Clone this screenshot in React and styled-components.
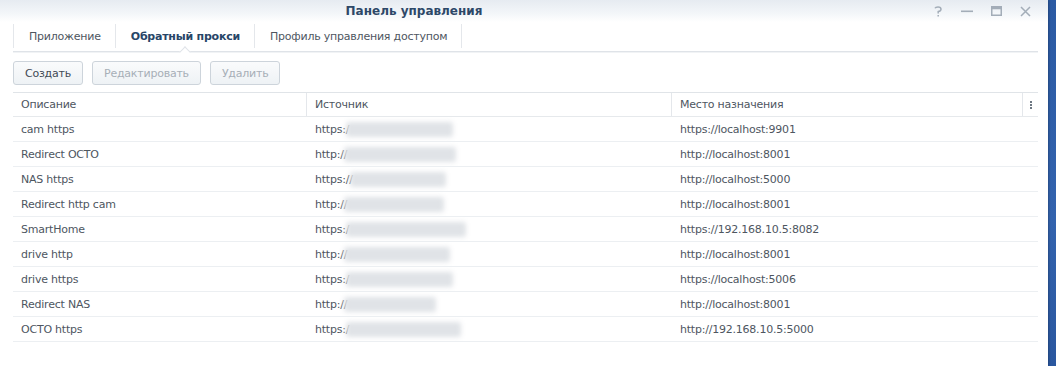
import React from "react";
import styled, { createGlobalStyle } from "styled-components";

const Global = createGlobalStyle`
  html, body { margin: 0; padding: 0; }
  body {
    width: 1056px;
    height: 366px;
    overflow: hidden;
    background: linear-gradient(180deg, #2b5aa3 0%, #3363ae 60%, #2a579f 100%);
    font-family: "DejaVu Sans", Verdana, sans-serif;
    font-size: 11px;
    letter-spacing: -0.22px;
    color: #4e565f;
  }
`;

const Window = styled.div`
  width: 1048px;
  height: 366px;
  background: #fff;
  display: flex;
  flex-direction: column;
  box-shadow: 1px 0 2px rgba(0, 0, 0, 0.25);
`;

const TitleBar = styled.div`
  height: 22px;
  flex: none;
  display: flex;
  align-items: center;
  background: linear-gradient(180deg, #e6ebf1 0%, #f3f6f9 60%, #ffffff 100%);
  position: relative;
`;

const Title = styled.div`
  flex: 1;
  text-align: center;
  padding-right: 220px;
  font-size: 12px;
  font-weight: bold;
  letter-spacing: 0;
  color: #2d4868;
  line-height: 22px;
`;

const WinControls = styled.div`
  position: absolute;
  right: 14px;
  top: 0;
  height: 22px;
  display: flex;
  align-items: center;
  gap: 11px;
`;

const CtrlBtn = styled.span`
  width: 18px;
  height: 18px;
  display: flex;
  align-items: center;
  justify-content: center;
  color: #a3adb8;
`;

const Body = styled.div`
  flex: 1;
  display: flex;
  flex-direction: column;
  padding: 0 10px 0 13px;
`;

const TabBar = styled.div`
  height: 29px;
  flex: none;
  display: flex;
  align-items: stretch;
  border-bottom: 1px solid #dfe3e8;
  box-shadow: 0 1px 0 #f1f3f5;
`;

const Tab = styled.div`
  position: relative;
  display: flex;
  align-items: center;
  padding: 0 14px 0 15px;
  margin: 2px 0 3px;
  border-right: 1px solid #e4e7eb;
  ${(p) => (p.$first ? "border-left: 1px solid #e4e7eb;" : "")}
  font-weight: ${(p) => (p.$active ? "bold" : "normal")};
  color: ${(p) => (p.$active ? "#274567" : "#4e565f")};
  &::after {
    content: "";
    display: ${(p) => (p.$active ? "block" : "none")};
    position: absolute;
    left: 50%;
    bottom: -8px;
    width: 7px;
    height: 7px;
    margin-left: -4px;
    background: #fff;
    border-left: 1px solid #dfe3e8;
    border-top: 1px solid #dfe3e8;
    transform: rotate(45deg);
  }
`;

const Toolbar = styled.div`
  display: flex;
  gap: 9px;
  margin-top: 9px;
  margin-bottom: 7px;
`;

const Button = styled.button`
  height: 24px;
  padding: 0 11px;
  border: 1px solid #cdd4db;
  border-radius: 3px;
  background: linear-gradient(180deg, #fafbfc 0%, #eef2f5 100%);
  font-family: inherit;
  font-size: 11px;
  letter-spacing: -0.22px;
  color: ${(p) => (p.disabled ? "#a7afb7" : "#3f4a55")};
  cursor: default;
`;

const Grid = styled.div`
  display: flex;
  flex-direction: column;
  border-top: 1px solid #e0e4e8;
`;

const cols = "293px 365px 351px 16px";

const HeaderRow = styled.div`
  display: grid;
  grid-template-columns: ${cols};
  height: 23px;
  border-bottom: 1px solid #e6e9ec;
`;

const HeaderCell = styled.div`
  display: flex;
  align-items: center;
  padding-left: 8px;
  border-left: ${(p) => (p.$first ? "none" : "1px solid #e4e7eb")};
  color: #4e565f;
  ${(p) => (p.$menu ? "padding-left: 0; justify-content: center;" : "")}
`;

const Row = styled.div`
  display: grid;
  grid-template-columns: ${cols};
  height: 24px;
  border-bottom: 1px solid #eceff2;
`;

const Cell = styled.div`
  display: flex;
  align-items: center;
  padding-left: ${(p) => (p.$first ? "8px" : "9px")};
  white-space: nowrap;
  overflow: hidden;
`;

const Blurred = styled.span`
  display: inline-block;
  width: ${(p) => p.$w}px;
  height: 15px;
  margin-left: -3px;
  background: #e0e3e7;
  border-radius: 3px;
  filter: blur(2.5px);
`;

const MenuDots = styled.span`
  display: flex;
  flex-direction: column;
  gap: 1px;
  & > i {
    display: block;
    width: 2px;
    height: 2px;
    background: #6d7782;
  }
`;

const rows = [
  ["cam https", "https:/", 107, "https://localhost:9901"],
  ["Redirect OCTO", "http://", 112, "http://localhost:8001"],
  ["NAS https", "https://", 96, "http://localhost:5000"],
  ["Redirect http cam", "http://", 100, "http://localhost:8001"],
  ["SmartHome", "https:/", 120, "https://192.168.10.5:8082"],
  ["drive http", "http://", 106, "http://localhost:8001"],
  ["drive https", "https:/", 107, "https://localhost:5006"],
  ["Redirect NAS", "http://", 92, "http://localhost:8001"],
  ["OCTO https", "https:/", 115, "http://192.168.10.5:5000"],
];

export default function App() {
  return (
    <>
      <Global />
      <Window>
        <TitleBar>
          <Title>Панель управления</Title>
          <WinControls>
            <CtrlBtn>
              <svg width="8" height="11" viewBox="0 0 8 11" fill="none" stroke="currentColor" strokeWidth="1.5">
                <path d="M1 2.2 Q1.5 1 4 1 Q7 1 7 3.2 Q7 5 4.2 5.6 L4.2 7.5" />
                <path d="M4.2 9 L4.2 10.5" />
              </svg>
            </CtrlBtn>
            <CtrlBtn>
              <svg width="12" height="12" viewBox="0 0 12 12">
                <rect x="0" y="5.5" width="12" height="1.6" fill="currentColor" />
              </svg>
            </CtrlBtn>
            <CtrlBtn>
              <svg width="11" height="10" viewBox="0 0 11 10" fill="none">
                <rect x="0.75" y="0.75" width="9.5" height="8.5" stroke="currentColor" strokeWidth="1.5" />
                <rect x="0.75" y="0.75" width="9.5" height="2.5" fill="currentColor" />
              </svg>
            </CtrlBtn>
            <CtrlBtn>
              <svg width="11" height="11" viewBox="0 0 11 11" stroke="currentColor" strokeWidth="1.5">
                <path d="M1 1 L10 10 M10 1 L1 10" />
              </svg>
            </CtrlBtn>
          </WinControls>
        </TitleBar>
        <Body>
          <TabBar>
            <Tab $first>Приложение</Tab>
            <Tab $active>Обратный прокси</Tab>
            <Tab>Профиль управления доступом</Tab>
          </TabBar>
          <Toolbar>
            <Button>Создать</Button>
            <Button disabled>Редактировать</Button>
            <Button disabled>Удалить</Button>
          </Toolbar>
          <Grid>
            <HeaderRow>
              <HeaderCell $first>Описание</HeaderCell>
              <HeaderCell>Источник</HeaderCell>
              <HeaderCell>Место назначения</HeaderCell>
              <HeaderCell $menu>
                <MenuDots>
                  <i />
                  <i />
                  <i />
                </MenuDots>
              </HeaderCell>
            </HeaderRow>
            {rows.map(([name, proto, w, dest]) => (
              <Row key={name}>
                <Cell $first>{name}</Cell>
                <Cell>
                  {proto}
                  <Blurred $w={w} />
                </Cell>
                <Cell>{dest}</Cell>
                <Cell />
              </Row>
            ))}
          </Grid>
        </Body>
      </Window>
    </>
  );
}
